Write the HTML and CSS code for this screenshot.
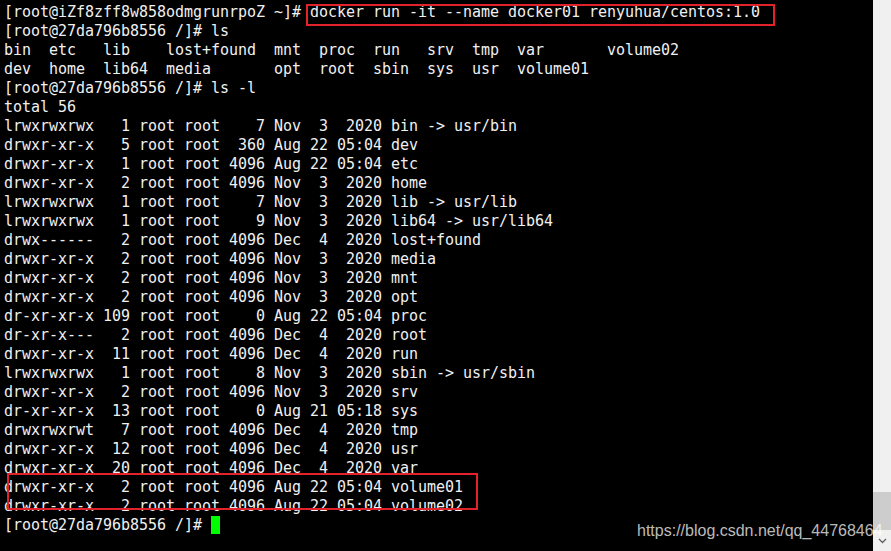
FILE: index.html
```html
<!DOCTYPE html>
<html lang="en">

<head>
  <meta charset="UTF-8">
  <meta name="viewport" content="width=device-width, initial-scale=1.0">
  <title>docker01 - terminal</title>
  <link rel="stylesheet" href="styles.css">
</head>

<body>
  <div class="window">
    <div class="terminal">
<pre class="output">[root@iZf8zff8w858odmgrunrpoZ ~]# docker run -it --name docker01 renyuhua/centos:1.0
[root@27da796b8556 /]# ls
bin  etc   lib    lost+found  mnt  proc  run   srv  tmp  var       volume02
dev  home  lib64  media       opt  root  sbin  sys  usr  volume01
[root@27da796b8556 /]# ls -l
total 56
lrwxrwxrwx   1 root root    7 Nov  3  2020 bin -> usr/bin
drwxr-xr-x   5 root root  360 Aug 22 05:04 dev
drwxr-xr-x   1 root root 4096 Aug 22 05:04 etc
drwxr-xr-x   2 root root 4096 Nov  3  2020 home
lrwxrwxrwx   1 root root    7 Nov  3  2020 lib -> usr/lib
lrwxrwxrwx   1 root root    9 Nov  3  2020 lib64 -> usr/lib64
drwx------   2 root root 4096 Dec  4  2020 lost+found
drwxr-xr-x   2 root root 4096 Nov  3  2020 media
drwxr-xr-x   2 root root 4096 Nov  3  2020 mnt
drwxr-xr-x   2 root root 4096 Nov  3  2020 opt
dr-xr-xr-x 109 root root    0 Aug 22 05:04 proc
dr-xr-x---   2 root root 4096 Dec  4  2020 root
drwxr-xr-x  11 root root 4096 Dec  4  2020 run
lrwxrwxrwx   1 root root    8 Nov  3  2020 sbin -> usr/sbin
drwxr-xr-x   2 root root 4096 Nov  3  2020 srv
dr-xr-xr-x  13 root root    0 Aug 21 05:18 sys
drwxrwxrwt   7 root root 4096 Dec  4  2020 tmp
drwxr-xr-x  12 root root 4096 Dec  4  2020 usr
drwxr-xr-x  20 root root 4096 Dec  4  2020 var
drwxr-xr-x   2 root root 4096 Aug 22 05:04 volume01
drwxr-xr-x   2 root root 4096 Aug 22 05:04 volume02
[root@27da796b8556 /]# <span class="cursor"></span></pre>

      <!-- red annotation boxes drawn over the screenshot -->
      <div class="mark mark-command"></div>
      <div class="mark mark-volumes"></div>
    </div>

    <div class="scrollbar">
      <div class="scroll-track"></div>
      <div class="scroll-thumb"></div>
      <div class="scroll-arrow">
        <svg width="9" height="6" viewBox="0 0 9 6">
          <path d="M1 1 L4.5 4.5 L8 1" fill="none" stroke="#606060" stroke-width="1.3" />
        </svg>
      </div>
    </div>

    <div class="watermark">https://blog.csdn.net/qq_44768464</div>
  </div>
</body>

</html>
```

FILE: styles.css
```css
html,
body {
  margin: 0;
  padding: 0;
  background-color: #000;
  overflow: hidden;
}

.window {
  position: relative;
  display: flex;
  width: 891px;
  height: 551px;
}

.terminal {
  position: relative;
  flex: 1;
  background-color: #000;
}

.output {
  margin: 0;
  padding: 3px 0 0 4px;
  font-family: "DejaVu Sans Mono", "Liberation Mono", monospace;
  font-size: 15px;
  letter-spacing: -0.03px;
  line-height: 19px;
  color: #f0f0f0;
  white-space: pre;
}

.cursor {
  display: inline-block;
  width: 9px;
  height: 18px;
  vertical-align: top;
  background-color: #00ff00;
}

.mark {
  position: absolute;
  box-sizing: border-box;
  border: 2px solid #e2232c;
}

.mark-command {
  left: 306px;
  top: 4px;
  width: 469px;
  height: 22px;
}

.mark-volumes {
  left: 7px;
  top: 473px;
  width: 471px;
  height: 37px;
}

.scrollbar {
  width: 18px;
  display: flex;
  flex-direction: column;
  background-color: #f0f0f0;
}

.scroll-track {
  flex: 1;
}

.scroll-thumb {
  height: 38px;
  background-color: #cdcdcd;
}

.scroll-arrow {
  height: 21px;
  display: flex;
  align-items: center;
  justify-content: center;
}

.watermark {
  position: absolute;
  left: 637px;
  top: 522px;
  font-family: "Liberation Sans", Arial, sans-serif;
  font-size: 16px;
  line-height: 18px;
  color: rgba(255, 255, 255, 0.74);
  white-space: nowrap;
}
```
